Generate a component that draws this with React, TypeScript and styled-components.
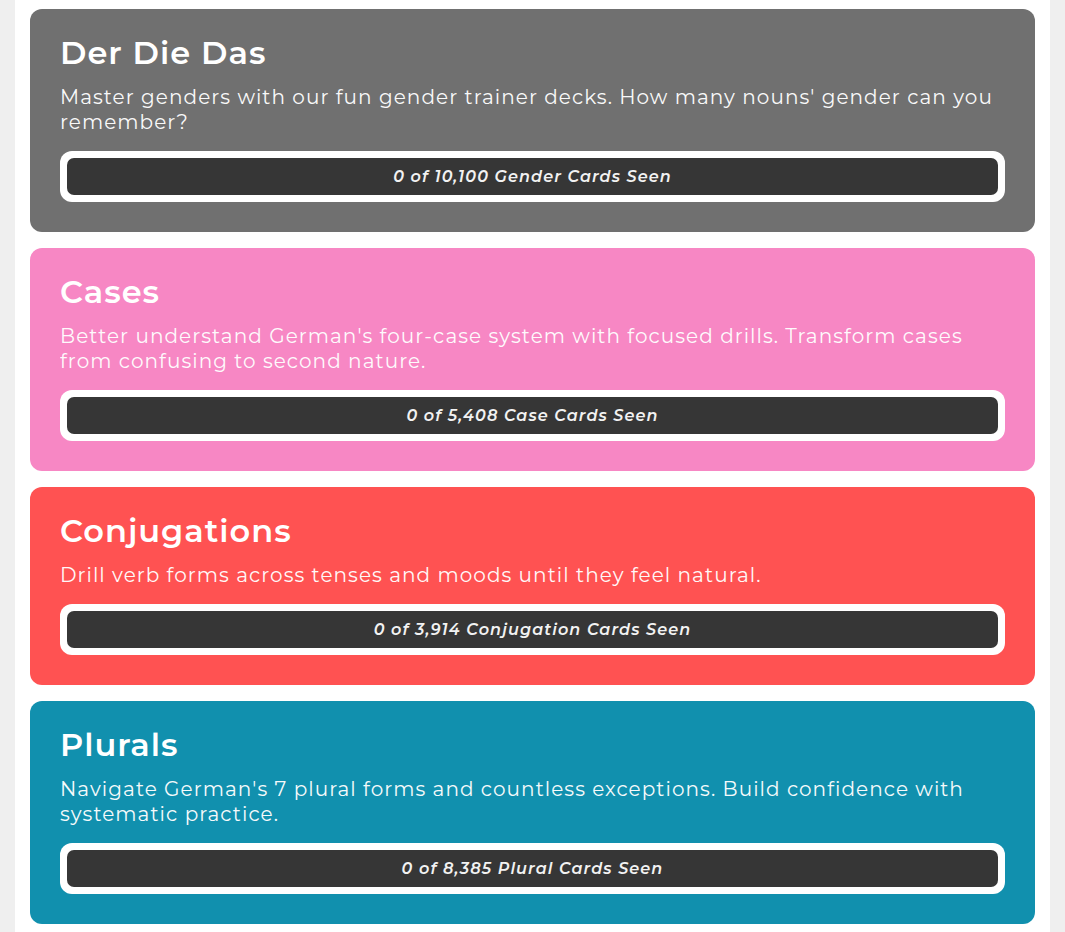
import React from 'react'
import styled, { createGlobalStyle } from 'styled-components'

const GlobalStyle = createGlobalStyle`
  html, body {
    margin: 0;
    padding: 0;
    background: #efefef;
  }
  * {
    box-sizing: border-box;
  }
`

const Page = styled.div`
  width: 1035px;
  margin-left: 15px;
  background: #ffffff;
  padding: 9px 15px 11px 15px;
  display: flex;
  flex-direction: column;
  gap: 16px;
  min-height: 932px;
  font-family: 'Montserrat', 'Open Sans', 'Noto Sans', sans-serif;
`

const DeckCard = styled.div<{ $bg: string }>`
  background: ${(p) => p.$bg};
  border-radius: 12px;
  padding: 24px 30px 30px 30px;
  display: flex;
  flex-direction: column;
  color: #ffffff;
`

const DeckTitle = styled.h2`
  margin: 0;
  font-size: 32px;
  line-height: 40px;
  font-weight: 600;
  letter-spacing: 1px;
`

const DeckText = styled.p`
  margin: 12px 0 0 0;
  font-size: 20px;
  line-height: 25px;
  font-weight: 400;
  letter-spacing: 1.05px;
  opacity: 0.96;
`

const ProgressOuter = styled.div`
  margin-top: 16px;
  background: #ffffff;
  border-radius: 12px;
  padding: 7px;
`

const ProgressInner = styled.div`
  background: #363636;
  border-radius: 7px;
  height: 37px;
  display: flex;
  align-items: center;
  justify-content: center;
  font-size: 16px;
  font-style: italic;
  font-weight: 600;
  letter-spacing: 1.1px;
  color: #f2f2f2;
`

const decks = [
  {
    title: 'Der Die Das',
    text: "Master genders with our fun gender trainer decks. How many nouns' gender can you remember?",
    seen: '0 of 10,100 Gender Cards Seen',
    bg: '#707070',
  },
  {
    title: 'Cases',
    text: "Better understand German's four-case system with focused drills. Transform cases from confusing to second nature.",
    seen: '0 of 5,408 Case Cards Seen',
    bg: '#f787c4',
  },
  {
    title: 'Conjugations',
    text: 'Drill verb forms across tenses and moods until they feel natural.',
    seen: '0 of 3,914 Conjugation Cards Seen',
    bg: '#ff5252',
  },
  {
    title: 'Plurals',
    text: "Navigate German's 7 plural forms and countless exceptions. Build confidence with systematic practice.",
    seen: '0 of 8,385 Plural Cards Seen',
    bg: '#1190ae',
  },
]

const App = () => {
  return (
    <>
      <GlobalStyle />
      <Page>
        {decks.map((d) => (
          <DeckCard key={d.title} $bg={d.bg}>
            <DeckTitle>{d.title}</DeckTitle>
            <DeckText>{d.text}</DeckText>
            <ProgressOuter>
              <ProgressInner>{d.seen}</ProgressInner>
            </ProgressOuter>
          </DeckCard>
        ))}
      </Page>
    </>
  )
}

export default App
